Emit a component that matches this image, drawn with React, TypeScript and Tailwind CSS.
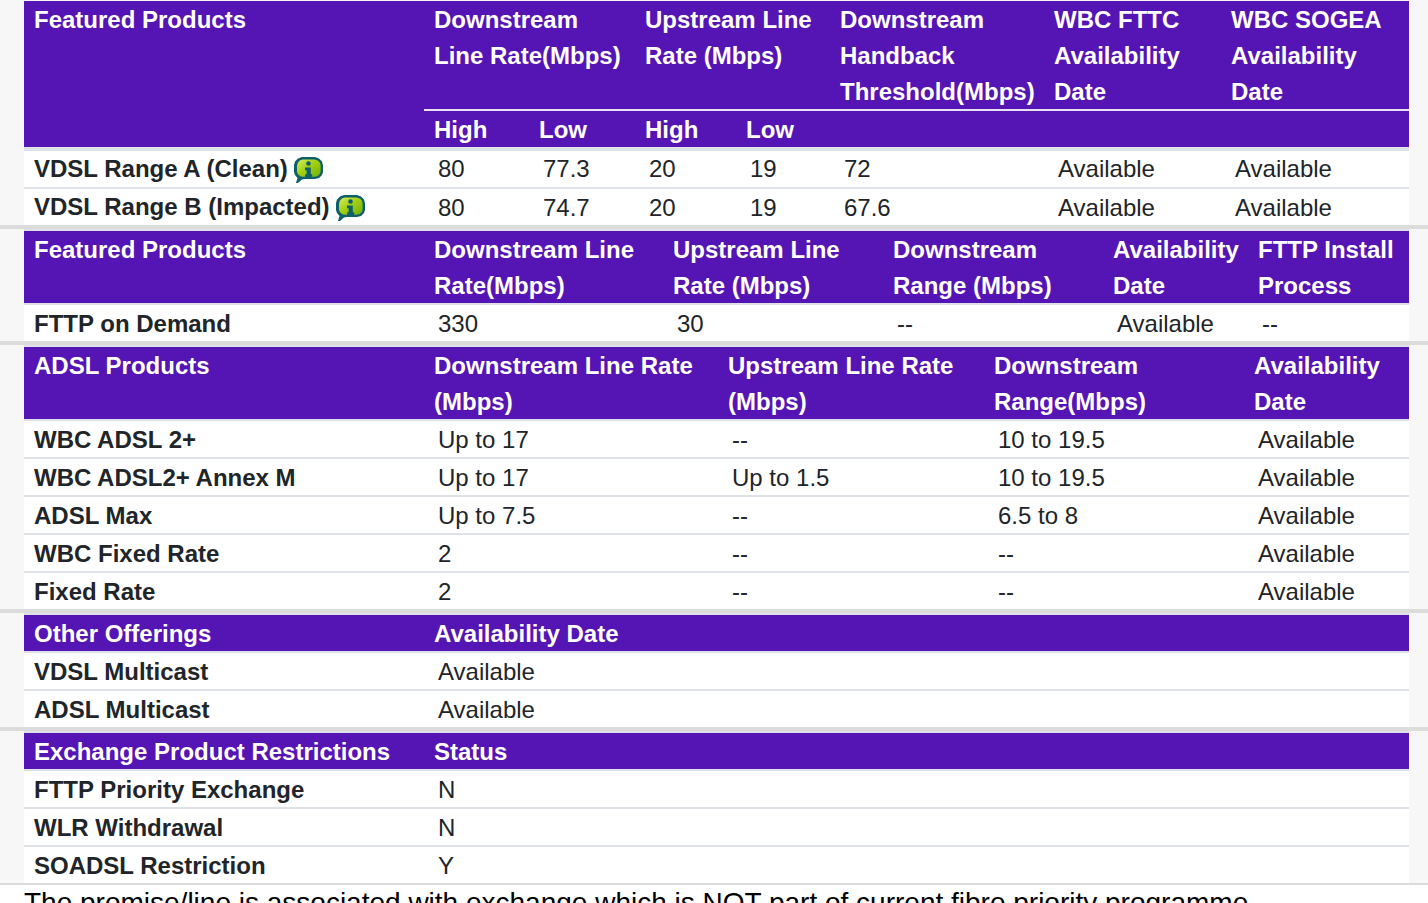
const InfoIcon = () => (
  <svg width="29" height="26" viewBox="0 0 29 26" className="inline-block align-middle ml-[6px] -mt-[2px]">
    <defs>
      <linearGradient id="bubble" x1="0" y1="0" x2="1" y2="1">
        <stop offset="0" stopColor="#d8ec62" />
        <stop offset="0.45" stopColor="#a4d012" />
        <stop offset="1" stopColor="#6fb00e" />
      </linearGradient>
    </defs>
    <path d="M8 0h13l4 1.500 3 3 1 4v6.500l-1 3-3 3-4 1H11l-3 .5-4 3.500h-2l1.500-5L1 18 0 15V8l1-3.500 3-3z" fill="#0d5f6b" />
    <path d="M8.500 2.500h12l3.200 1 2.100 2.100.8 3v6l-.8 2.500-2.100 2-3.200.7H9l-2.500-.5-2.300-1.800L3 15V8.500l.9-2.800 1.900-2.300z" fill="url(#bubble)" />
    <circle cx="14.500" cy="6.500" r="2.300" fill="#0d5f6b" />
    <path d="M11 10.500h5.800v6.700h1.400V20h-7v-2.800h1.400v-3.900H11z" fill="#0d5f6b" />
  </svg>
);

const Head = ({ children, className = "" }: { children?: React.ReactNode; className?: string }) => (
  <div className={`px-[10px] text-white font-bold leading-[36px] translate-y-[1px] whitespace-nowrap ${className}`}>{children}</div>
);

const Label = ({ children, className = "leading-[37px]" }: { children: React.ReactNode; className?: string }) => (
  <div className={`pl-[10px] h-[36px] font-bold text-[#212529] whitespace-nowrap ${className}`}>{children}</div>
);

const Cell = ({ children, className = "leading-[37px]" }: { children: React.ReactNode; className?: string }) => (
  <div className={`pl-[14px] h-[36px] text-[#212529] ${className}`}>{children}</div>
);

const Line = () => <div className="col-span-full h-[2px] bg-[#dee2e6]" />;

const Section = ({ children }: { children: React.ReactNode }) => (
  <div className="pl-[24px] pr-[19px]">
    <div className="bg-white">{children}</div>
  </div>
);

// full-width rule between the tables, the cell border carries on 2px under it
const Rule = () => (
  <>
    <div className="h-[4px] bg-[#dcdcdc]" />
    <div className="pl-[24px] pr-[19px]">
      <div className="h-[2px] bg-[#dee2e6]" />
    </div>
  </>
);

const Gray = () => <div className="h-[2px] bg-[#dee2e6]" />;

const range = [
  ["VDSL Range A (Clean)", "80", "77.3", "20", "19", "72", "Available", "Available"],
  ["VDSL Range B (Impacted)", "80", "74.7", "20", "19", "67.6", "Available", "Available"],
];

const adsl = [
  ["WBC ADSL 2+", "Up to 17", "--", "10 to 19.5", "Available"],
  ["WBC ADSL2+ Annex M", "Up to 17", "Up to 1.5", "10 to 19.5", "Available"],
  ["ADSL Max", "Up to 7.5", "--", "6.5 to 8", "Available"],
  ["WBC Fixed Rate", "2", "--", "--", "Available"],
  ["Fixed Rate", "2", "--", "--", "Available"],
];

const Rows = ({ rows, grid }: { rows: string[][]; grid: string }) => (
  <div className={`grid ${grid}`}>
    {rows.map((r, i) => (
      <div key={r[0]} className="contents">
        {i > 0 && <Line />}
        {r.map((c, j) => (j === 0 ? <Label key={j}>{c}</Label> : <Cell key={j}>{c}</Cell>))}
      </div>
    ))}
  </div>
);

export default function App() {
  const t1 = "grid-cols-[400px_105px_106px_101px_94px_214px_177px_188px]";
  const t2 = "grid-cols-[400px_239px_220px_220px_145px_161px]";
  const t3 = "grid-cols-[400px_294px_266px_260px_165px]";
  const t4 = "grid-cols-[400px_985px]";

  return (
    <div className="h-[903px] overflow-hidden bg-white text-[24px] font-['Liberation_Sans',Arial,sans-serif]">
      <div className="bg-[#f7f7f7] pt-[1px]">
        <Section>
          <div className={`grid ${t1} bg-[#5514b4] h-[146px]`}>
            <Head className="row-span-2">Featured Products</Head>
            <Head className="col-span-2">Downstream<br />Line Rate(Mbps)</Head>
            <Head className="col-span-2">Upstream Line<br />Rate (Mbps)</Head>
            <Head>Downstream<br />Handback<br />Threshold(Mbps)</Head>
            <Head>WBC FTTC<br />Availability<br />Date</Head>
            <Head>WBC SOGEA<br />Availability<br />Date</Head>
            <div className="col-start-2 col-span-7 border-t-[2px] border-[#e8e3f2] grid grid-cols-[105px_106px_101px_94px_1fr]">
              <Head>High</Head>
              <Head>Low</Head>
              <Head>High</Head>
              <Head>Low</Head>
            </div>
          </div>
          <Gray />
          <Gray />
          <div className={`grid ${t1}`}>
            {range.map((r, i) => (
              <div key={r[0]} className="contents">
                {i > 0 && <Line />}
                <Label className="leading-[36px]">{r[0]}<InfoIcon /></Label>
                {r.slice(1).map((c, j) => (
                  <Cell key={j} className={i === 0 ? "leading-[36px]" : "leading-[37px]"}>{c}</Cell>
                ))}
              </div>
            ))}
          </div>
        </Section>
        <Rule />
        <Section>
          <div className={`grid ${t2} bg-[#5514b4]`}>
            <Head>Featured Products</Head>
            <Head>Downstream Line<br />Rate(Mbps)</Head>
            <Head>Upstream Line<br />Rate (Mbps)</Head>
            <Head>Downstream<br />Range (Mbps)</Head>
            <Head>Availability<br />Date</Head>
            <Head>FTTP Install<br />Process</Head>
          </div>
          <Gray />
          <Rows grid={t2} rows={[["FTTP on Demand", "330", "30", "--", "Available", "--"]]} />
        </Section>
        <Rule />
        <Section>
          <div className={`grid ${t3} bg-[#5514b4]`}>
            <Head>ADSL Products</Head>
            <Head>Downstream Line Rate<br />(Mbps)</Head>
            <Head>Upstream Line Rate<br />(Mbps)</Head>
            <Head>Downstream<br />Range(Mbps)</Head>
            <Head>Availability<br />Date</Head>
          </div>
          <Gray />
          <Rows grid={t3} rows={adsl} />
        </Section>
        <Rule />
        <Section>
          <div className={`grid ${t4} bg-[#5514b4]`}>
            <Head>Other Offerings</Head>
            <Head>Availability Date</Head>
          </div>
          <Gray />
          <Rows grid={t4} rows={[["VDSL Multicast", "Available"], ["ADSL Multicast", "Available"]]} />
        </Section>
        <Rule />
        <Section>
          <div className={`grid ${t4} bg-[#5514b4]`}>
            <Head>Exchange Product Restrictions</Head>
            <Head>Status</Head>
          </div>
          <Gray />
          <Rows grid={t4} rows={[["FTTP Priority Exchange", "N"], ["WLR Withdrawal", "N"], ["SOADSL Restriction", "Y"]]} />
        </Section>
        <div className="h-[2px] bg-[#dcdcdc]" />
      </div>
      <p className="pl-[24px] pt-[4px] text-[28px] leading-[28px] text-black whitespace-nowrap">
        The promise/line is associated with exchange which is NOT part of current fibre priority programme
      </p>
    </div>
  );
}
